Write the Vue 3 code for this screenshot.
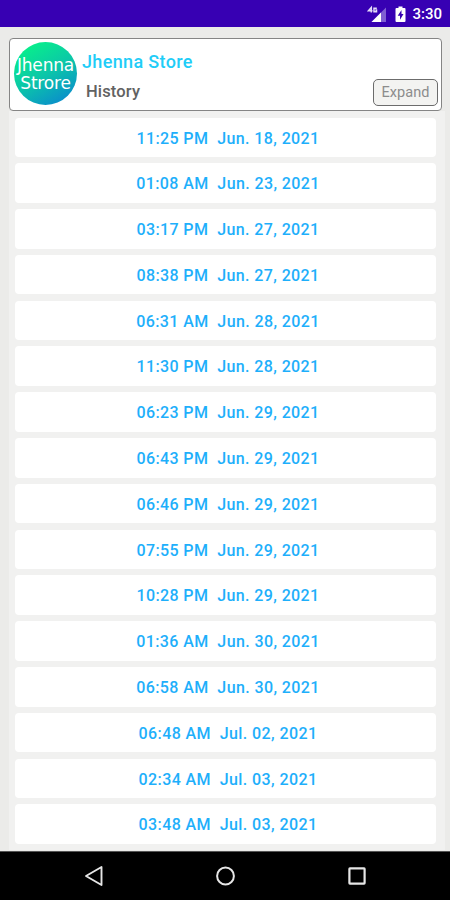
<script setup>
const entries = [
  ['11:25 PM', 'Jun. 18, 2021'],
  ['01:08 AM', 'Jun. 23, 2021'],
  ['03:17 PM', 'Jun. 27, 2021'],
  ['08:38 PM', 'Jun. 27, 2021'],
  ['06:31 AM', 'Jun. 28, 2021'],
  ['11:30 PM', 'Jun. 28, 2021'],
  ['06:23 PM', 'Jun. 29, 2021'],
  ['06:43 PM', 'Jun. 29, 2021'],
  ['06:46 PM', 'Jun. 29, 2021'],
  ['07:55 PM', 'Jun. 29, 2021'],
  ['10:28 PM', 'Jun. 29, 2021'],
  ['01:36 AM', 'Jun. 30, 2021'],
  ['06:58 AM', 'Jun. 30, 2021'],
  ['06:48 AM', 'Jul. 02, 2021'],
  ['02:34 AM', 'Jul. 03, 2021'],
  ['03:48 AM', 'Jul. 03, 2021'],
]
</script>

<template>
  <div class="screen">
    <div class="status">
      <svg class="signal" width="20" height="18" viewBox="0 0 20 18">
        <path d="M19 2.500V17H4.500Z" fill="#7f5fd2" />
        <path d="M14 7.500V17H4.500Z" fill="#fff" />
        <g fill="none" stroke="#e4dcf8" stroke-width="1.500">
          <path d="M4.300 7.500V2.500L1.400 5.800H5.500" />
          <path d="M9.800 3.200H7V6.700H9.500V5H8.300" />
        </g>
      </svg>
      <svg class="battery" width="11" height="17" viewBox="0 0 11 17">
        <path d="M3.500 .5H7.500V2H9.500Q10.500 2 10.500 3V15Q10.500 16 9.500 16H1.500Q.5 16 .5 15V3Q.5 2 1.500 2H3.500Z" fill="#fff" />
        <path d="M6.500 4L2.700 9.700H5V13.700L8.500 8H6.500Z" fill="#3700b3" />
      </svg>
      <span class="clock">3:30</span>
    </div>

    <main class="content">
      <header class="header">
        <div class="avatar">
          <span>Jhenna</span>
          <span>Strore</span>
        </div>
        <div class="info">
          <div class="store">Jhenna Store</div>
          <div class="subtitle">History</div>
        </div>
        <button class="expand">Expand</button>
      </header>

      <div class="list">
        <div v-for="(entry, i) in entries" :key="i" class="row">
          <span>{{ entry[0] }}</span>
          <span>{{ entry[1] }}</span>
        </div>
      </div>
    </main>

    <nav class="nav">
      <svg width="20" height="22" viewBox="0 0 20 22">
        <path d="M17.500 2V20L2 11Z" fill="none" stroke="#e6e6e6" stroke-width="1.900" stroke-linejoin="round" />
      </svg>
      <svg width="20" height="22" viewBox="0 0 20 22">
        <circle cx="10.500" cy="11" r="8.400" fill="none" stroke="#e6e6e6" stroke-width="2" />
      </svg>
      <svg width="20" height="22" viewBox="0 0 20 22">
        <rect x="2.400" y="3.400" width="15.200" height="15.200" rx=".5" fill="none" stroke="#e6e6e6" stroke-width="2.200" />
      </svg>
    </nav>
  </div>
</template>

<style>
body {
  margin: 0;
}
</style>

<style scoped>
.screen {
  width: 450px;
  height: 900px;
  display: flex;
  flex-direction: column;
  overflow: hidden;
  background: #ebebe9;
  font-family: Roboto, "Liberation Sans", sans-serif;
}
.status {
  height: 26.500px;
  flex: none;
  box-sizing: border-box;
  display: flex;
  align-items: center;
  justify-content: flex-end;
  padding: 2px 8px 0 0;
  background: #3700b3;
  color: #fff;
}
.signal {
  margin-right: 8px;
}
.battery {
  margin-right: 6px;
}
.clock {
  font-size: 15px;
  font-weight: 500;
  line-height: 20px;
}
.content {
  flex: 1;
  min-height: 0;
  padding: 11px 8px 0 9px;
}
.header {
  height: 73px;
  box-sizing: border-box;
  display: flex;
  align-items: flex-start;
  padding: 3.500px 3px 0 4px;
  border: 1.500px solid #858585;
  border-radius: 4px;
  background: #fff;
}
.avatar {
  width: 63px;
  height: 63px;
  flex: none;
  box-sizing: border-box;
  display: flex;
  flex-direction: column;
  align-items: center;
  justify-content: center;
  padding-top: 1px;
  border-radius: 50%;
  background: linear-gradient(150deg, #08f08a 10%, #0bc7a8 50%, #0a86d0 95%);
  color: #fff;
  font-family: "DejaVu Sans", sans-serif;
  font-size: 17px;
  line-height: 18px;
  letter-spacing: -.2px;
  white-space: nowrap;
}
.info {
  flex: 1;
  padding: 9px 0 0 5px;
}
.store {
  color: #1fcdf8;
  font-size: 18px;
  font-weight: 500;
  line-height: 22px;
  letter-spacing: .35px;
}
.subtitle {
  padding: 8px 0 0 4px;
  color: #626262;
  font-size: 16.500px;
  font-weight: 500;
  line-height: 22px;
  letter-spacing: .15px;
}
.expand {
  width: 65px;
  height: 27px;
  margin-top: 36.500px;
  padding: 0;
  border: 1.500px solid #6c6c6c;
  border-radius: 5px;
  background: #f3f3f1;
  color: #8c8c8c;
  font-family: inherit;
  font-size: 14.500px;
  letter-spacing: .1px;
}
.list {
  display: flex;
  flex-direction: column;
  gap: 6.300px;
  margin: 0 -3px 0 0;
  padding: 7px 9px 6px 6px;
  background: #f1f1f0;
}
.row {
  height: 39.500px;
  flex: none;
  box-sizing: border-box;
  display: flex;
  align-items: center;
  justify-content: center;
  gap: 8.800px;
  padding: 1.500px 0 0 5px;
  border-radius: 4px;
  background: #fff;
  color: #1eaffb;
  font-size: 16px;
  font-weight: 500;
  letter-spacing: .4px;
  white-space: nowrap;
}
.nav {
  height: 49px;
  flex: none;
  box-sizing: border-box;
  display: flex;
  align-items: center;
  justify-content: center;
  gap: 111.500px;
  border-top: 1px solid #555;
  background: #000;
}
</style>
